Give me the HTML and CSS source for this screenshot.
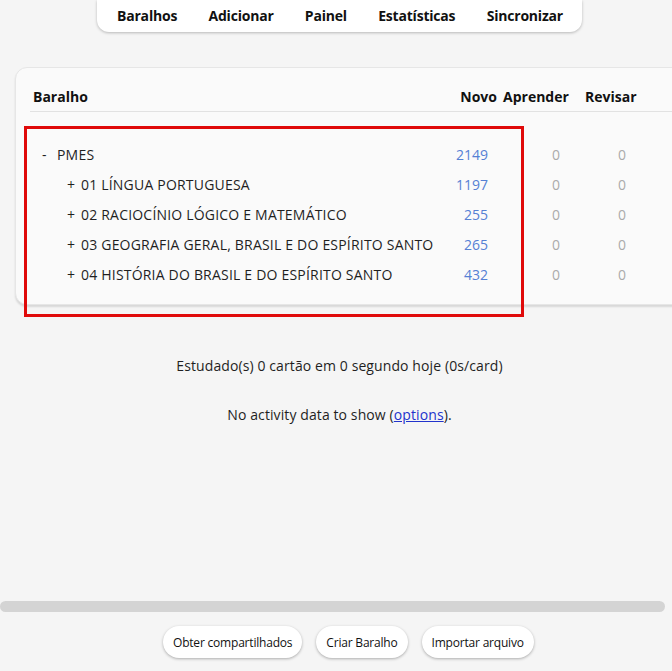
FILE: index.html
```html
<!DOCTYPE html>
<html lang="pt">
<head>
<meta charset="utf-8">
<title>Baralhos</title>
<link rel="stylesheet" href="styles.css">
</head>
<body>
<div class="page">
  <nav class="topbar">
    <a class="nav-item">Baralhos</a>
    <a class="nav-item">Adicionar</a>
    <a class="nav-item">Painel</a>
    <a class="nav-item">Estatísticas</a>
    <a class="nav-item">Sincronizar</a>
  </nav>

  <section class="card">
    <div class="deck-grid head">
      <div class="c-name">Baralho</div>
      <div class="c-new">Novo</div>
      <div class="c-learn">Aprender</div>
      <div class="c-rev">Revisar</div>
    </div>
    <div class="deck-body">
      <div class="deck-grid row">
        <div class="c-name lvl0"><span class="toggle">-</span>PMES</div>
        <div class="c-new">2149</div>
        <div class="c-learn">0</div>
        <div class="c-rev">0</div>
      </div>
      <div class="deck-grid row">
        <div class="c-name lvl1"><span class="toggle">+</span>01 LÍNGUA PORTUGUESA</div>
        <div class="c-new">1197</div>
        <div class="c-learn">0</div>
        <div class="c-rev">0</div>
      </div>
      <div class="deck-grid row">
        <div class="c-name lvl1"><span class="toggle">+</span>02 RACIOCÍNIO LÓGICO E MATEMÁTICO</div>
        <div class="c-new">255</div>
        <div class="c-learn">0</div>
        <div class="c-rev">0</div>
      </div>
      <div class="deck-grid row">
        <div class="c-name lvl1"><span class="toggle">+</span>03 GEOGRAFIA GERAL, BRASIL E DO ESPÍRITO SANTO</div>
        <div class="c-new">265</div>
        <div class="c-learn">0</div>
        <div class="c-rev">0</div>
      </div>
      <div class="deck-grid row">
        <div class="c-name lvl1"><span class="toggle">+</span>04 HISTÓRIA DO BRASIL E DO ESPÍRITO SANTO</div>
        <div class="c-new">432</div>
        <div class="c-learn">0</div>
        <div class="c-rev">0</div>
      </div>
    </div>
  </section>

  <p class="studied">Estudado(s) 0 cartão em 0 segundo hoje (0s/card)</p>
  <p class="activity">No activity data to show (<a class="link" href="#">options</a>).</p>

  <div class="spacer"></div>
  <div class="hscroll"></div>

  <div class="actions">
    <button class="btn">Obter compartilhados</button>
    <button class="btn">Criar Baralho</button>
    <button class="btn">Importar arquivo</button>
  </div>

  <div class="highlight"></div>
</div>
</body>
</html>
```
FILE: styles.css
```css
* { box-sizing: border-box; }
html, body { margin: 0; padding: 0; }
body {
  background: #f5f5f5;
  font-family: "Open Sans", "Noto Sans", sans-serif;
  font-size: 14px;
  color: #1f1f1f;
  overflow: hidden;
}
.page {
  position: relative;
  width: 672px;
  height: 671px;
  display: flex;
  flex-direction: column;
  overflow: hidden;
}
.topbar {
  align-self: flex-start;
  margin-left: 97px;
  width: 485px;
  height: 32px;
  background: #fff;
  border-radius: 0 0 12px 12px;
  box-shadow: 0 1px 3px rgba(0,0,0,0.25);
  display: flex;
  align-items: center;
  justify-content: space-between;
  padding: 0 19px 2px 20px;
}
.nav-item {
  font-weight: 700;
  font-size: 14px;
  color: #111;
  letter-spacing: -0.2px;
}
.card {
  margin-top: 35px;
  margin-left: 15px;
  width: 690px;
  background: #fafafa;
  border: 1px solid #e6e6e6;
  border-radius: 12px;
  box-shadow: 0 2px 2px rgba(0,0,0,0.12);
  padding: 19px 0 14px 14px;
}
.deck-grid {
  display: grid;
  grid-template-columns: 419px 45px 80px 62px;
  align-items: center;
}
.head {
  height: 25px;
  padding-left: 3px;
  border-bottom: 1px solid #e2e2e2;
  font-weight: 700;
  color: #111;
  align-items: start;
  line-height: 20px;
}
.head .c-new { text-align: right; }
.head .c-learn { padding-left: 6px; }
.head .c-rev { padding-left: 8px; }
.deck-body { padding: 28px 0 0 3px; }
.row { height: 30px; line-height: 20px; }
.row .c-name { letter-spacing: 0.2px; }
.row .c-new { text-align: right; padding-right: 9px; color: #5580d4; }
.row .c-learn { text-align: right; padding-right: 17px; color: #aaa; }
.row .c-rev { text-align: right; padding-right: 13px; color: #aaa; }
.c-name { white-space: nowrap; }
.lvl0 { padding-left: 9px; }
.lvl1 { padding-left: 34px; }
.toggle { display: inline-block; width: 15px; letter-spacing: 0; }
.lvl1 .toggle { width: 14px; }
.studied {
  margin: 51px 0 0 0;
  text-align: center;
  padding-left: 7px;
  line-height: 20px;
  letter-spacing: 0.1px;
}
.activity {
  margin: 29px 0 0 0;
  text-align: center;
  padding-left: 7px;
  line-height: 20px;
  letter-spacing: 0.1px;
}
.link { color: #2233cc; }
.spacer { flex: 1; }
.hscroll {
  width: 665px;
  height: 11px;
  background: #d4d4d4;
  border-radius: 6px;
  margin-bottom: 14px;
}
.actions {
  display: flex;
  gap: 14px;
  margin-left: 163px;
  margin-bottom: 13px;
}
.btn {
  height: 32px;
  padding: 0 10px;
  border: none;
  border-radius: 16px;
  background: #fff;
  box-shadow: 0 1px 3px rgba(0,0,0,0.3);
  font-family: inherit;
  font-size: 12px;
  color: #111;
  letter-spacing: -0.2px;
}
.highlight {
  position: absolute;
  left: 24px;
  top: 126px;
  width: 500px;
  height: 191px;
  border: 3px solid #e00a0a;
  pointer-events: none;
}
```
